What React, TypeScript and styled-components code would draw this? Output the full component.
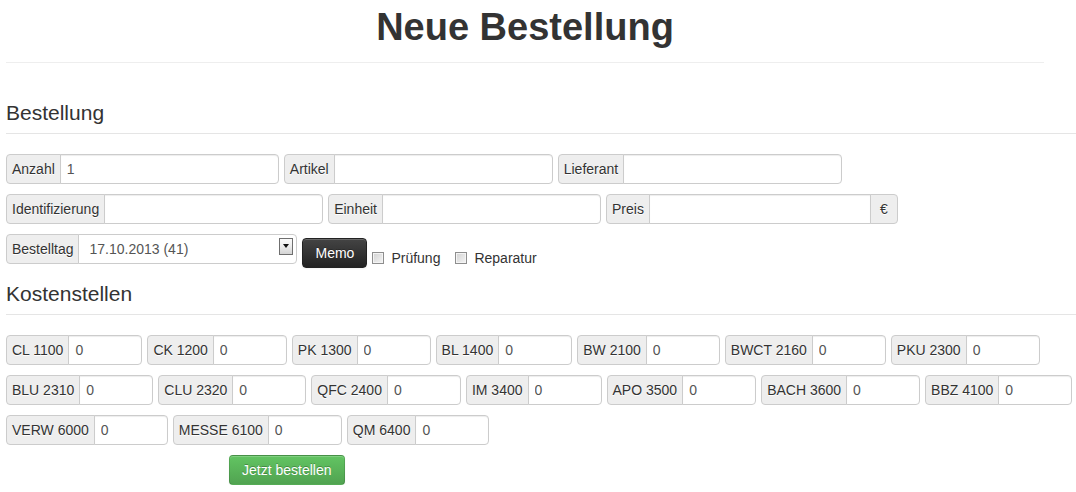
import React from 'react';
import styled, { createGlobalStyle } from 'styled-components';

const GlobalStyle = createGlobalStyle`
  * {
    box-sizing: border-box;
  }
  body {
    margin: 0;
    background: #fff;
    color: #333;
    font-family: 'Liberation Sans', Arial, sans-serif;
    font-size: 14px;
    line-height: 20px;
  }
`;

const Page = styled.div`
  padding-left: 6px;
`;

const PageHeader = styled.div`
  width: 1038px;
  padding: 7px 0 15px;
  margin-bottom: 30px;
  border-bottom: 1px solid #eee;
`;

const Title = styled.h1`
  margin: 0;
  font-size: 38px;
  line-height: 40px;
  font-weight: bold;
  text-align: center;
  color: #333;
`;

const Legend = styled.div`
  font-size: 21px;
  line-height: 40px;
  color: #333;
  border-bottom: 1px solid #e5e5e5;
  margin-bottom: 20px;
`;

const Row = styled.div`
  display: flex;
  align-items: flex-start;
  gap: 5px;
  margin-bottom: 10px;
`;

// the memo button and checkboxes sit a little lower but must not push the next legend down
const ToolRow = styled(Row)`
  height: 30px;
`;

const Group = styled.div`
  display: flex;
  height: 30px;
`;

const AddOn = styled.span<{ $append?: boolean }>`
  display: block;
  min-width: 28px;
  height: 30px;
  padding: 4px 5px;
  line-height: 20px;
  white-space: nowrap;
  text-align: center;
  background: #eee;
  border: 1px solid #ccc;
  text-shadow: 0 1px 0 #fff;
  border-radius: ${(p) => (p.$append ? '0 4px 4px 0' : '4px 0 0 4px')};
  margin: ${(p) => (p.$append ? '0 0 0 -1px' : '0 -1px 0 0')};
  position: relative;
  z-index: ${(p) => (p.$append ? 1 : 0)};
`;

const Field = styled.input<{ $width: number; $squared?: boolean }>`
  width: ${(p) => p.$width}px;
  height: 30px;
  padding: 4px 6px;
  margin: 0;
  font: inherit;
  color: #555;
  background: #fff;
  border: 1px solid #ccc;
  border-radius: ${(p) => (p.$squared ? '0' : '0 4px 4px 0')};
  box-shadow: inset 0 1px 1px rgba(0, 0, 0, 0.075);
  outline: none;
`;

const Select = styled.div`
  display: flex;
  align-items: flex-start;
  width: 219px;
  height: 30px;
  padding: 0 3px 0 10px;
  color: #555;
  line-height: 28px;
  background: #fff;
  border: 1px solid #ccc;
  border-radius: 0 4px 4px 0;
`;

const DropButton = styled.span`
  display: flex;
  justify-content: center;
  padding-top: 5px;
  width: 14px;
  height: 17px;
  margin: 3px 0 0 auto;
  border: 1px solid #6f6f6f;
  background: linear-gradient(#fafafa, #f0f0f0 40%, #d4d4d4);

  &::after {
    content: '';
    width: 0;
    height: 0;
    border-left: 3.5px solid transparent;
    border-right: 3.5px solid transparent;
    border-top: 4px solid #111;
  }
`;

const Button = styled.button<{ $tone: 'inverse' | 'success' }>`
  height: 30px;
  padding: 4px 12px;
  font: inherit;
  line-height: 20px;
  color: #fff;
  cursor: pointer;
  border-radius: 4px;
  text-shadow: 0 -1px 0 rgba(0, 0, 0, 0.25);
  box-shadow: inset 0 1px 0 rgba(255, 255, 255, 0.2), 0 1px 2px rgba(0, 0, 0, 0.05);
  border: 1px solid
    ${(p) => (p.$tone === 'inverse' ? '#222' : 'rgba(0, 0, 0, 0.12)')};
  background: ${(p) =>
    p.$tone === 'inverse'
      ? 'linear-gradient(#444, #222)'
      : 'linear-gradient(#62c462, #51a351)'};
`;

const MemoButton = styled(Button)`
  margin-top: 4px;
  flex-shrink: 0;
`;

const Checks = styled.div`
  display: flex;
  gap: 15px;
  margin-top: 14px;
`;

const CheckLabel = styled.label`
  display: flex;
  align-items: center;
  gap: 7px;
  height: 20px;
  color: #333;
`;

const CheckBox = styled.span`
  display: block;
  width: 12px;
  height: 12px;
  border: 1px solid #8e8e8e;
  background: linear-gradient(135deg, #d2d2d2, #f4f4f4);
  box-shadow: inset 0 0 0 1px #f4f4f4;
`;

const SubmitRow = styled.div`
  padding-left: 223px;
`;

type Cost = { label: string };

const costRows: Cost[][] = [
  ['CL 1100', 'CK 1200', 'PK 1300', 'BL 1400', 'BW 2100', 'BWCT 2160', 'PKU 2300'].map((label) => ({ label })),
  ['BLU 2310', 'CLU 2320', 'QFC 2400', 'IM 3400', 'APO 3500', 'BACH 3600', 'BBZ 4100'].map((label) => ({ label })),
  ['VERW 6000', 'MESSE 6100', 'QM 6400'].map((label) => ({ label })),
];

const Prepend = ({ label, value = '', width = 219 }: { label: string; value?: string; width?: number }) => (
  <Group>
    <AddOn>{label}</AddOn>
    <Field $width={width} defaultValue={value} />
  </Group>
);

const App = () => (
  <Page>
    <GlobalStyle />
    <PageHeader>
      <Title>Neue Bestellung</Title>
    </PageHeader>

    <Legend>Bestellung</Legend>
    <Row>
      <Prepend label="Anzahl" value="1" />
      <Prepend label="Artikel" />
      <Prepend label="Lieferant" />
    </Row>
    <Row>
      <Prepend label="Identifizierung" />
      <Prepend label="Einheit" />
      <Group>
        <AddOn>Preis</AddOn>
        <Field $width={222} $squared defaultValue="" />
        <AddOn $append>€</AddOn>
      </Group>
    </Row>
    <ToolRow>
      <Group>
        <AddOn>Bestelltag</AddOn>
        <Select>
          17.10.2013 (41)
          <DropButton />
        </Select>
      </Group>
      <MemoButton $tone="inverse">Memo</MemoButton>
      <Checks>
        <CheckLabel>
          <CheckBox />
          Prüfung
        </CheckLabel>
        <CheckLabel>
          <CheckBox />
          Reparatur
        </CheckLabel>
      </Checks>
    </ToolRow>

    <Legend>Kostenstellen</Legend>
    {costRows.map((row, i) => (
      <Row key={i}>
        {row.map((c) => (
          <Prepend key={c.label} label={c.label} value="0" width={74} />
        ))}
      </Row>
    ))}
    <SubmitRow>
      <Button $tone="success">Jetzt bestellen</Button>
    </SubmitRow>
  </Page>
);

export default App;
